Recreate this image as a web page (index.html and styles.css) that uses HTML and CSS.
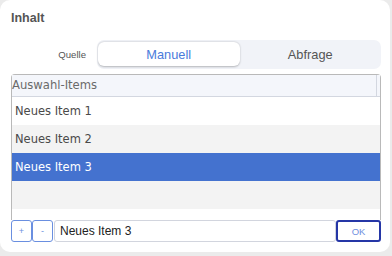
FILE: index.html
```html
<!DOCTYPE html>
<html lang="de">
<head>
  <meta charset="UTF-8">
  <title>Inhalt</title>
  <link rel="stylesheet" href="styles.css">
</head>
<body>
  <div class="panel">
    <h3 class="titel">Inhalt</h3>

    <div class="quelle">
      <span class="label">Quelle</span>
      <div class="segment">
        <button class="seg aktiv">Manuell</button>
        <button class="seg">Abfrage</button>
      </div>
    </div>

    <div class="liste">
      <div class="kopf"><span>Auswahl-Items</span></div>
      <div class="zeile">Neues Item 1</div>
      <div class="zeile grau">Neues Item 2</div>
      <div class="zeile gewaehlt">Neues Item 3</div>
      <div class="zeile grau"></div>
    </div>

    <div class="werkzeug">
      <button class="klein">+</button>
      <button class="klein">-</button>
      <input class="eingabe" value="Neues Item 3">
      <button class="ok">OK</button>
    </div>
  </div>
</body>
</html>
```

FILE: styles.css
```css
body {
  margin: 0;
  background: #ebebeb;
  font-family: "Liberation Sans", Arial, sans-serif;
}
.panel {
  width: 390px;
  height: 252px;
  box-sizing: border-box;
  padding: 11px 0 0 11px;
  background: white;
  border-radius: 10px;
}
.titel {
  margin: 0;
  font-size: 12.5px;
  font-weight: bold;
  color: #555;
  line-height: 14px;
}
.quelle {
  display: grid;
  grid-template-columns: 75px 284px;
  column-gap: 11px;
  align-items: center;
  margin-top: 15px;
}
.label {
  text-align: right;
  font-size: 9.6px;
  color: #555;
}
.segment {
  display: flex;
  background: #f1f3f8;
  border-radius: 7px;
  padding: 2px 0 3px 1px;
}
.seg {
  flex: 1;
  height: 24px;
  border: none;
  background: none;
  font-family: "Liberation Sans", Arial, sans-serif;
  font-size: 12.8px;
  color: #555;
  padding: 0;
}
.seg.aktiv {
  background: white;
  color: #4a7bdb;
  border-radius: 6px;
  box-shadow: 0 0.5px 2px rgba(0, 0, 0, 0.25);
}
.liste {
  width: 370px;
  height: 146px;
  box-sizing: border-box;
  margin-top: 5px;
  border: 1px solid #b9b9b9;
  border-bottom: none;
  border-radius: 4px 4px 0 0;
  font-family: "DejaVu Sans", sans-serif;
}
.kopf {
  height: 21px;
  background: #f4f6fb;
  border-bottom: 1px solid #d3d7e0;
  display: flex;
  align-items: center;
  font-size: 11.6px;
  color: #6a6a6a;
}
.kopf span {
  flex: 1;
  height: 100%;
  line-height: 21px;
  margin-right: 3px;
  border-right: 1px solid #d3d7e0;
}
.zeile {
  height: 28px;
  line-height: 28px;
  padding-left: 3px;
  font-size: 11.5px;
  color: #4a4a4a;
}
.zeile.grau {
  background: #f3f3f3;
}
.zeile.gewaehlt {
  background: #4472cf;
  color: white;
}
.werkzeug {
  display: flex;
  width: 370px;
  height: 22px;
}
.klein {
  width: 21px;
  height: 22px;
  box-sizing: border-box;
  border: 1px solid #6a8fe0;
  border-radius: 3px;
  background: white;
  color: #6a8fe0;
  font-size: 9px;
  padding: 0;
}
.eingabe {
  flex: 1;
  margin-left: 1px;
  height: 22px;
  box-sizing: border-box;
  border: 1px solid #d2d5de;
  border-radius: 3px;
  padding: 0 5px;
  font-family: "Liberation Sans", Arial, sans-serif;
  font-size: 12px;
  color: #222;
  outline: none;
}
.ok {
  width: 45px;
  height: 22px;
  box-sizing: border-box;
  border: 2px solid #2536a6;
  border-radius: 3px;
  background: white;
  color: #6f8fe0;
  font-family: "Liberation Sans", Arial, sans-serif;
  font-size: 9.5px;
  padding: 0;
}
```
